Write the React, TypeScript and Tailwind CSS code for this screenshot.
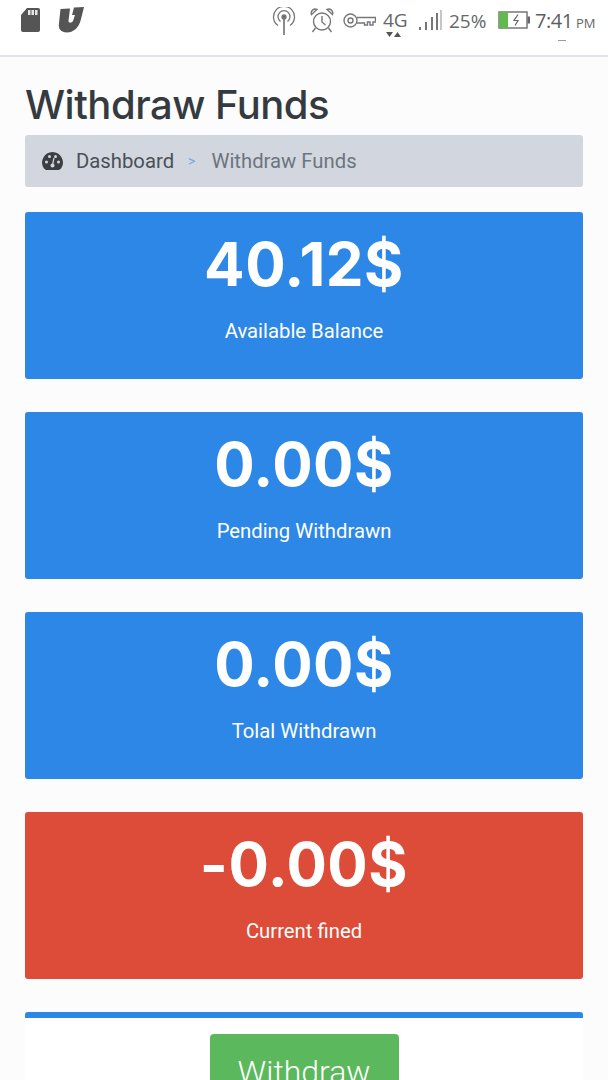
const CARDS = [
  { value: "40.12$", label: "Available Balance", color: "bg-[#2d87e6]" },
  { value: "0.00$", label: "Pending Withdrawn", color: "bg-[#2d87e6]" },
  { value: "0.00$", label: "Tolal Withdrawn", color: "bg-[#2d87e6]" },
  { value: "-0.00$", label: "Current fined", color: "bg-[#dc4c38]" },
]

function StatusBar() {
  return (
    <div className="relative flex h-[57px] items-start border-b-2 border-[#e2e2e8] bg-white pl-[21px] pr-[13px] text-[#63676c] font-['Open_Sans',sans-serif]">
      <svg width="19" height="24" viewBox="0 0 19 24" className="mt-[8px]">
        <path d="M6 0h11a2 2 0 0 1 2 2v20a2 2 0 0 1-2 2H2a2 2 0 0 1-2-2V7z" fill="#555" />
        <rect x="7" y="2" width="2.500" height="5" fill="#e4e4e4" />
        <rect x="10.500" y="2" width="2.500" height="5" fill="#e4e4e4" />
        <rect x="14" y="2" width="2.500" height="5" fill="#e4e4e4" />
      </svg>
      <svg width="26" height="27" viewBox="0 0 26 27" className="ml-[18px] mt-[6px]">
        <path
          d="M2.500 3L12 2.500L10.500 15C10.500 17 13.500 17.500 15 15L17 9L14 9L16 1.500L26 1L23 13C21 22 15 26.500 9 26.500C3 26.500 0 23 1 17Z"
          fill="#555"
        />
      </svg>
      <svg width="24" height="28" viewBox="0 0 24 28" fill="none" stroke="#777" strokeWidth="1.300" className="ml-auto mt-[7px]">
        <path d="M6 18.500a10.500 10.500 0 1 1 12 0" />
        <path d="M8.500 14.500a6 6 0 1 1 7 0" />
        <circle cx="12" cy="10" r="2" fill="#666" />
        <path d="M12 10v18" strokeWidth="1.700" />
      </svg>
      <svg width="24" height="25" viewBox="0 0 24 25" fill="none" stroke="#777" strokeWidth="1.400" className="ml-[14px] mt-[8px]">
        <circle cx="12" cy="13.500" r="8.500" />
        <path d="M12 8v6l3.500 3" />
        <path d="M1.500 6.500a4 4 0 0 1 5.500-5z" />
        <path d="M22.500 6.500a4 4 0 0 0-5.500-5z" />
        <path d="M5.500 20l-3 4M18.500 20l3 4" />
      </svg>
      <svg width="33" height="15" viewBox="0 0 33 15" fill="none" stroke="#777" strokeWidth="1.400" className="ml-[9px] mt-[13px]">
        <circle cx="7.500" cy="7.500" r="6.500" />
        <circle cx="7.500" cy="7.500" r="2.500" />
        <path d="M14 4.500H32.500V9H30V12H27V9H24.500V12H21.500V10H14" />
      </svg>
      <div className="relative ml-[7px] mt-[8px] w-[24px] whitespace-nowrap text-[19px] leading-[24px]">
        4G
        <div className="absolute top-[24px] left-[3px] flex gap-[1px]">
          <svg width="7" height="5" viewBox="0 0 7 5"><path d="M0 0h7L3.500 5z" fill="#555" /></svg>
          <svg width="7" height="5" viewBox="0 0 7 5"><path d="M0 5h7L3.500 0z" fill="#555" /></svg>
        </div>
      </div>
      <svg width="24" height="20" viewBox="0 0 24 20" className="ml-[11px] mt-[10px]">
        <rect x="1" y="17" width="2" height="3" fill="#777" />
        <rect x="7" y="12" width="2" height="8" fill="#777" />
        <rect x="13" y="7" width="2" height="13" fill="#777" />
        <rect x="18" y="3" width="2" height="17" fill="#777" />
        <rect x="22" y="0" width="2" height="20" fill="#c4c6ca" />
      </svg>
      <span className="ml-[7px] mt-[8px] w-[37px] whitespace-nowrap text-[19px] leading-[26px]">25%</span>
      <svg width="32" height="18" viewBox="0 0 32 18" fill="none" className="ml-[12px] mt-[11px]">
        <rect x="1" y="1" width="28" height="16" stroke="#777" strokeWidth="1.500" />
        <rect x="1" y="1" width="9" height="16" fill="#62b94f" />
        <rect x="29.500" y="5.500" width="2.500" height="7" fill="#666" />
        <path d="M20 3.500l-4 6h4l-3 5" stroke="#666" strokeWidth="1.200" />
      </svg>
      <span className="ml-[5px] mt-[7px] w-[36px] whitespace-nowrap text-[20px] leading-[28px] tracking-[-0.5px] text-[#5a5e63]">7:41</span>
      <span className="ml-[5px] mt-[14px] w-[19px] whitespace-nowrap text-[13px] leading-[18px]">PM</span>
      <div className="absolute top-[40px] left-[558px] h-px w-2 bg-[#99a]" />
    </div>
  )
}

export default function App() {
  return (
    <div className="h-[1080px] w-[608px] overflow-hidden bg-[#fcfcfc] font-['Roboto',sans-serif]">
      <StatusBar />
      <div className="px-[25px]">
        <h1 className="mt-[25px] text-[40px] leading-[46px] font-medium tracking-[-0.5px] text-[#343a40] font-['Inter',sans-serif]">
          Withdraw Funds
        </h1>
        <div className="mt-[7px] flex h-[52px] items-center rounded-[3px] bg-[#d2d6de] pl-[17px] text-[20.300px]">
          <svg width="21" height="18" viewBox="0 0 21 18">
            <path d="M10.500 0A10.500 10.500 0 0 0 2 16.500L4 18h13l2-1.500A10.500 10.500 0 0 0 10.500 0z" fill="#3b3f44" />
            <circle cx="4.500" cy="10" r="1.500" fill="#d2d6de" />
            <circle cx="7.500" cy="4.500" r="1.500" fill="#d2d6de" />
            <circle cx="13.500" cy="4.500" r="1.500" fill="#d2d6de" />
            <circle cx="16.500" cy="10" r="1.500" fill="#d2d6de" />
            <circle cx="10.500" cy="13.500" r="2" fill="#d2d6de" />
            <path d="M10.500 13L12 6" stroke="#d2d6de" strokeWidth="1.200" />
          </svg>
          <span className="ml-[13px] text-[#495057]">Dashboard</span>
          <span className="ml-[14px] text-[14px] text-[#7aa7d6]">&gt;</span>
          <span className="ml-[16px] text-[#6c757d]">Withdraw Funds</span>
        </div>
        <div className="mt-[25px] flex flex-col gap-[33px]">
          {CARDS.map((card) => (
            <div
              key={card.label}
              className={`flex h-[167px] flex-col items-center rounded-[3px] text-white ${card.color}`}
            >
              <div className="mt-[15px] text-[60px] leading-[74px] font-bold tracking-[0.5px] font-['Inter',sans-serif]">{card.value}</div>
              <div className="mt-[18px] text-[20.300px] leading-[24px]">{card.label}</div>
            </div>
          ))}
          <div className="flex h-[100px] items-start justify-center rounded-[3px] border-t-[6px] border-[#2d87e6] bg-white pt-[16px]">
            <button className="flex h-[80px] w-[189px] justify-center rounded-[4px] bg-[#5cb85c] pt-[18px] text-[32px] leading-[40px] font-light text-white">
              Withdraw
            </button>
          </div>
        </div>
      </div>
    </div>
  )
}
